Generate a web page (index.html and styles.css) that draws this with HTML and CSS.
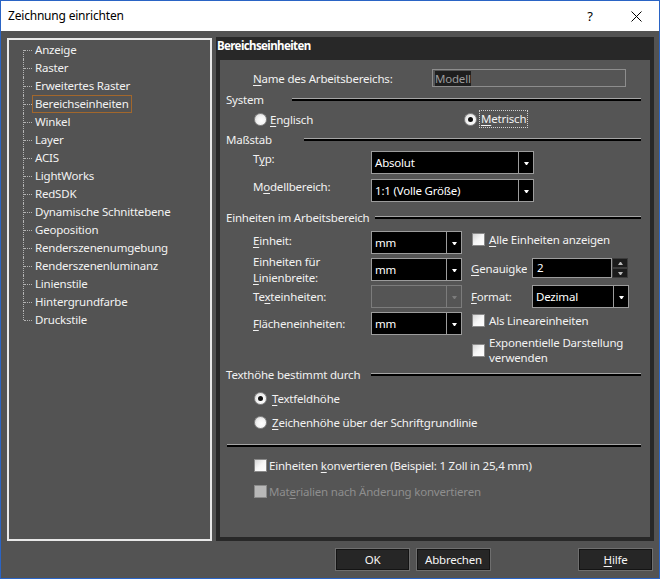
FILE: index.html
```html
<!DOCTYPE html>
<html lang="de">
<head>
  <meta charset="UTF-8">
  <title>Zeichnung einrichten</title>
  <link rel="stylesheet" href="styles.css">
</head>
<body>
  <div class="window">
    <div class="titlebar">
      <span class="title">Zeichnung einrichten</span>
      <span class="tb-btn">?</span>
      <span class="tb-btn">
        <svg width="11" height="11" viewBox="0 0 11 11"><path d="M0.5 0.5 L10.5 10.5 M10.5 0.5 L0.5 10.5" stroke="#000" stroke-width="1" fill="none"/></svg>
      </span>
    </div>

    <div class="body">
      <div class="main">
        <!-- category tree -->
        <div class="tree">
          <ul class="tree-list">
            <li>Anzeige</li>
            <li>Raster</li>
            <li>Erweitertes Raster</li>
            <li class="selected"><span>Bereichseinheiten</span></li>
            <li>Winkel</li>
            <li>Layer</li>
            <li>ACIS</li>
            <li>LightWorks</li>
            <li>RedSDK</li>
            <li>Dynamische Schnittebene</li>
            <li>Geoposition</li>
            <li>Renderszenenumgebung</li>
            <li>Renderszenenluminanz</li>
            <li>Linienstile</li>
            <li>Hintergrundfarbe</li>
            <li>Druckstile</li>
          </ul>
        </div>

        <!-- settings page -->
        <div class="panel">
          <div class="panel-head">Bereichseinheiten</div>
          <div class="panel-body">
            <div class="row row-name">
              <span class="lbl lbl-name"><u>N</u>ame des Arbeitsbereichs:</span>
              <div class="textbox"><span class="sel">Modell</span></div>
            </div>

            <div class="group group-system"><span class="group-title">System</span><span class="rule"></span></div>
            <div class="row row-radios">
              <span class="radio-item radio-first"><span class="radio"></span><span><u>E</u>nglisch</span></span>
              <span class="radio-item"><span class="radio checked"></span><span class="focus"><u>M</u>etrisch</span></span>
            </div>

            <div class="group group-scale"><span class="group-title">Maßstab</span><span class="rule"></span></div>
            <div class="row row-combo row-typ">
              <span class="lbl lbl-combo">T<u>y</u>p:</span>
              <div class="combo combo-wide"><span class="combo-field">Absolut</span><span class="combo-btn"><i class="caret"></i></span></div>
            </div>
            <div class="row row-combo row-model">
              <span class="lbl lbl-combo">M<u>o</u>dellbereich:</span>
              <div class="combo combo-wide"><span class="combo-field">1:1 (Volle Größe)</span><span class="combo-btn"><i class="caret"></i></span></div>
            </div>

            <div class="group group-units"><span class="group-title">Einheiten im Arbeitsbereich</span><span class="rule"></span></div>
            <div class="units">
              <span class="lbl u-lbl u-first"><u>E</u>inheit:</span>
              <div class="combo"><span class="combo-field">mm</span><span class="combo-btn"><i class="caret"></i></span></div>
              <label class="check-item span-right check-first"><span class="check"></span><span><u>A</u>lle Einheiten anzeigen</span></label>

              <span class="lbl u-lbl u-two">Einheiten für<br><u>L</u>inienbreite:</span>
              <div class="combo"><span class="combo-field">mm</span><span class="combo-btn"><i class="caret"></i></span></div>
              <span class="lbl u-right clip"><u>G</u>enauigkeit</span>
              <div class="spin">
                <span class="spin-field">2</span>
                <span class="spin-btns"><span class="spin-btn"><i class="caret up"></i></span><span class="spin-btn"><i class="caret"></i></span></span>
              </div>

              <span class="lbl u-lbl">Te<u>x</u>teinheiten:</span>
              <div class="combo disabled"><span class="combo-field"></span><span class="combo-btn"><i class="caret"></i></span></div>
              <span class="lbl u-right"><u>F</u>ormat:</span>
              <div class="combo combo-format"><span class="combo-field">Dezimal</span><span class="combo-btn"><i class="caret"></i></span></div>

              <span class="lbl u-lbl"><u>F</u>lächeneinheiten:</span>
              <div class="combo"><span class="combo-field">mm</span><span class="combo-btn"><i class="caret"></i></span></div>
              <label class="check-item span-right check-linear"><span class="check"></span><span>Als Lineareinheiten</span></label>

              <label class="check-item span-right check-exp"><span class="check"></span><span class="two-line">Exponentielle Darstellung<br>verwenden</span></label>
            </div>

            <div class="group group-text"><span class="group-title">Texthöhe bestimmt durch</span><span class="rule"></span></div>
            <div class="row radio-row radio-row-1">
              <span class="radio-item wide-gap"><span class="radio checked"></span><span><u>T</u>extfeldhöhe</span></span>
            </div>
            <div class="row radio-row radio-row-2">
              <span class="radio-item wide-gap"><span class="radio"></span><span><u>Z</u>eichenhöhe über der Schriftgrundlinie</span></span>
            </div>

            <div class="rule rule-full"></div>

            <div class="row check-row check-row-1">
              <label class="check-item"><span class="check"></span><span>Einheiten <u>k</u>onvertieren (Beispiel: 1 Zoll in 25,4 mm)</span></label>
            </div>
            <div class="row check-row check-row-2">
              <label class="check-item disabled"><span class="check"></span><span>Mat<u>e</u>rialien nach Änderung konvertieren</span></label>
            </div>
          </div>
        </div>
      </div>

      <div class="buttons">
        <button class="btn btn-ok">OK</button>
        <button class="btn btn-cancel">Abbrechen</button>
        <button class="btn btn-help"><u>H</u>ilfe</button>
      </div>
    </div>
  </div>
</body>
</html>
```

FILE: styles.css
```css
html, body {
  margin: 0;
  padding: 0;
}

body {
  width: 660px;
  height: 579px;
  font-family: "Noto Sans", "Open Sans", sans-serif;
  font-size: 11.5px;
  letter-spacing: -0.2px;
  color: #f2f2f2;
  background: #535353;
}

u {
  text-decoration-thickness: 1px;
  text-underline-offset: 2px;
}

.window {
  width: 660px;
  height: 579px;
  box-sizing: border-box;
  border: 1px solid #2a64c5;
  display: flex;
  flex-direction: column;
}

/* Title bar */
.titlebar {
  height: 30px;
  flex: none;
  background: #fff;
  display: flex;
  align-items: center;
  color: #000;
}

.title {
  flex: 1;
  padding-left: 7px;
  font-size: 12px;
  padding-bottom: 1px;
}

.tb-btn {
  width: 46px;
  height: 30px;
  display: flex;
  align-items: center;
  justify-content: center;
  font-size: 13px;
}

/* Body */
.body {
  flex: 1;
  display: flex;
  flex-direction: column;
  padding: 6px 5px 0 6px;
  background: #535353;
}

.main {
  display: flex;
  gap: 4px;
  height: 504px;
}

/* Tree */
.tree {
  width: 205px;
  height: 503px;
  margin-top: 1px;
  box-sizing: border-box;
  border: 2px solid #e9e9e9;
  background: #535353;
}

.tree-list {
  list-style: none;
  margin: 0;
  padding: 1px 0 0 0;
}

.tree-list li {
  position: relative;
  height: 18px;
  line-height: 18px;
  padding-left: 26px;
  white-space: nowrap;
}

.tree-list li::before {
  content: "";
  position: absolute;
  left: 14px;
  top: 0;
  bottom: 0;
  border-left: 1px dotted #b4b4b4;
}

.tree-list li:first-child::before {
  top: 9px;
}

.tree-list li:last-child::before {
  bottom: 9px;
}

.tree-list li::after {
  content: "";
  position: absolute;
  left: 15px;
  top: 9px;
  width: 8px;
  border-top: 1px dotted #b4b4b4;
}

.tree-list li.selected span {
  display: inline-block;
  height: 16px;
  line-height: 16px;
  margin-left: -3px;
  padding: 0 2px;
  border: 1px solid #a2672c;
}

/* Panel */
.panel {
  width: 438px;
  display: flex;
  flex-direction: column;
  background: #282828;
}

.panel-head {
  height: 23px;
  line-height: 18px;
  padding-left: 1px;
  font-weight: bold;
  letter-spacing: -0.6px;
  color: #fff;
  flex: none;
}

.panel-body {
  flex: 1;
  margin: 0 4px 4px 4px;
  background: #555;
  padding: 9px 9px 0 6px;
  display: flex;
  flex-direction: column;
}

.row {
  display: flex;
  align-items: center;
}

.lbl {
  white-space: nowrap;
}

/* Name */
.row-name {
  height: 18px;
  padding-left: 27px;
}

.lbl-name {
  width: 179px;
}

.textbox {
  width: 194px;
  height: 18px;
  box-sizing: border-box;
  border: 1px solid #8d8d8d;
  padding-left: 2px;
  display: flex;
  align-items: center;
}

.textbox .sel {
  background: #1e1e1e;
  color: #9c9c9c;
  line-height: 15px;
}

/* Group headers */
.group {
  display: flex;
  align-items: center;
  height: 20px;
}

.group-title {
  flex: none;
  white-space: nowrap;
}

.rule {
  flex: 1;
  height: 0;
  border-top: 1px solid #a5a5a5;
  border-bottom: 2px solid #000;
  margin-top: 1px;
}

.group-system { margin-top: 2px; }
.group-system .group-title { width: 66px; }
.group-scale { margin-top: 1px; }
.group-scale .group-title { width: 78px; }
.group-units { margin-top: 5px; }
.group-units .group-title { width: 149px; }
.group-text { margin-top: 2px; }
.group-text .group-title { width: 145px; }

/* Radios */
.row-radios {
  height: 18px;
  margin-top: 1px;
  padding-left: 28px;
}

.radio-item {
  display: flex;
  align-items: center;
  gap: 3px;
  white-space: nowrap;
}

.radio-item.wide-gap {
  gap: 5px;
}

.radio-first {
  width: 210px;
}

.radio {
  width: 13px;
  height: 13px;
  box-sizing: border-box;
  border-radius: 50%;
  border: 1px solid #8a8a8a;
  background: radial-gradient(circle at 60% 60%, #ffffff 0, #f4f4f4 45%, #cfcfcf 100%);
  display: flex;
  align-items: center;
  justify-content: center;
  flex: none;
}

.radio.checked::after {
  content: "";
  width: 5px;
  height: 5px;
  border-radius: 50%;
  background: #111;
}

.focus {
  outline: 1px dotted #d0d0d0;
  outline-offset: 0;
  padding: 0 1px;
  line-height: 16px;
}

/* Combos */
.row-combo {
  padding-left: 27px;
  align-items: flex-start;
}

.row-typ { margin-top: 2px; }
.row-model { margin-top: 5px; }

.lbl-combo {
  width: 118px;
  line-height: 16px;
}

.combo {
  display: flex;
  height: 23px;
  width: 91px;
}

.combo-wide {
  width: 163px;
}

.combo-format {
  width: 97px;
}

.combo-field {
  flex: 1;
  min-width: 0;
  box-sizing: border-box;
  background: #000;
  border: 1px solid #9c9c9c;
  color: #fff;
  padding-left: 3px;
  line-height: 21px;
  white-space: nowrap;
  overflow: hidden;
}

.combo-btn {
  width: 15px;
  flex: none;
  box-sizing: border-box;
  background: #000;
  border: 1px solid #9c9c9c;
  border-left: 0;
  display: flex;
  align-items: center;
  justify-content: center;
}

.caret {
  width: 1px;
  height: 0;
  border-left: 2px solid transparent;
  border-right: 2px solid transparent;
  border-top: 3px solid #fff;
  margin-top: 2px;
}

.caret.up {
  border-top: 0;
  border-bottom: 3px solid #bbb;
  margin-top: 0;
}

.combo.disabled .combo-field,
.combo.disabled .combo-btn {
  background: #555;
  border-color: #7c7c7c;
}

.combo.disabled .caret {
  border-top-color: #7c7c7c;
}

/* Units grid */
.units {
  display: grid;
  grid-template-columns: 118px 91px 9px 61px auto;
  grid-template-rows: 23px 23px 23px 24px 22px;
  row-gap: 4px;
  margin: 4px 0 0 27px;
}

.u-lbl {
  grid-column: 1;
  align-self: center;
  line-height: 18px;
}

.u-first {
  margin-top: -4px;
}

.u-two {
  line-height: 16px;
  align-self: start;
  margin-top: -4px;
}

.units .combo,
.units .spin {
  grid-column: 2;
}

.u-right {
  grid-column: 4;
  align-self: center;
  line-height: 18px;
}

.units .u-right + .spin,
.units .u-right + .combo {
  grid-column: 5;
}

.clip {
  width: 56px;
  overflow: hidden;
  margin-top: -2px;
}

.span-right {
  grid-column: 4 / 6;
  margin-left: 1px;
}

.check-first {
  align-self: start;
  margin-top: 1px;
}

.check-linear {
  align-self: center;
  margin-top: -7px;
}

.check-exp {
  margin-top: -5px;
  align-self: start;
}

.two-line {
  line-height: 15px;
}

/* Spin */
.spin {
  display: flex;
  height: 20px;
  align-self: start;
}

.spin-field {
  width: 80px;
  box-sizing: border-box;
  background: #000;
  border: 1px solid #9c9c9c;
  color: #fff;
  padding-left: 4px;
  line-height: 18px;
}

.spin-btns {
  width: 16px;
  display: flex;
  flex-direction: column;
}

.spin-btn {
  flex: 1;
  background: #1b1b1b;
  border: 1px solid #3c3c3c;
  display: flex;
  align-items: center;
  justify-content: center;
}

.spin-btn .caret {
  border-top-color: #bbb;
  margin-top: 0;
}

/* Checkboxes */
.check-item {
  display: flex;
  align-items: center;
  gap: 4px;
  white-space: nowrap;
}

.check {
  width: 13px;
  height: 13px;
  flex: none;
  box-sizing: border-box;
  border: 1px solid #8a8a8a;
  background: linear-gradient(135deg, #d5d5d5 0, #f7f7f7 50%, #ffffff 100%);
}

.check-item.disabled {
  color: #8e8e8e;
}

.check-item.disabled .check {
  background: #b8b8b8;
  border-color: #8a8a8a;
}

/* Lower radios and checks */
.radio-row {
  height: 18px;
  padding-left: 28px;
}

.radio-row-1 { margin-top: 5px; }
.radio-row-2 { margin-top: 6px; }

.rule-full {
  flex: none;
  margin: 13px 0 0 1px;
}

.check-row {
  height: 18px;
  padding-left: 28px;
}

.check-row .check-item {
  gap: 2px;
}

.check-row-1 { margin-top: 9px; }
.check-row-2 { margin-top: 8px; }

/* Buttons */
.buttons {
  display: flex;
  margin-top: 7px;
  padding-right: 1px;
}

.btn {
  width: 75px;
  height: 23px;
  background: #262626;
  border: 1px solid #6f6f6f;
  box-shadow: inset 0 0 0 1px #141414;
  color: #f5f5f5;
  font-family: "Noto Sans", "Open Sans", sans-serif;
  font-size: 11.5px;
  letter-spacing: -0.2px;
  padding: 0;
}

.btn-ok {
  margin-left: 328px;
}

.btn-cancel {
  margin-left: 6px;
}

.btn-help {
  margin-left: auto;
}
```
